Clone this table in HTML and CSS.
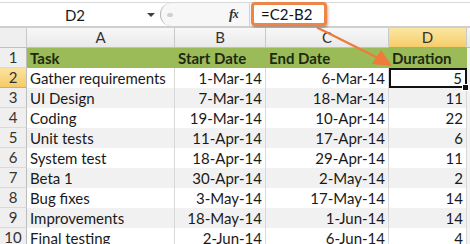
FILE: index.html
```html
<!DOCTYPE html>
<html>
<head>
<meta charset="utf-8">
<link rel="stylesheet" href="styles.css">
</head>
<body>
<div class="app">
  <div class="toolbar">
    <div class="namebox"><span class="name">D2</span><span class="caret"></span></div>
    <div class="splitter"><span class="dot"></span></div>
    <div class="fx">f<span class="x">x</span></div>
    <div class="formula"><span class="formula-hl">=C2-B2</span></div>
  </div>
  <div class="sheet">
    <div class="ch corner"></div>
    <div class="ch">A</div>
    <div class="ch">B</div>
    <div class="ch">C</div>
    <div class="ch sel">D</div>
    <div class="ch tail"></div>

    <div class="rh">1</div>
    <div class="c hd">Task</div>
    <div class="c hd">Start Date</div>
    <div class="c hd">End Date</div>
    <div class="c hd">Duration</div>
    <div class="c tail"></div>

    <div class="rh sel">2</div>
    <div class="c">Gather requirements</div>
    <div class="c r">1-Mar-14</div>
    <div class="c r">6-Mar-14</div>
    <div class="c r active">5<span class="handle"></span></div>
    <div class="c tail"></div>

    <div class="rh">3</div>
    <div class="c g">UI Design</div>
    <div class="c g r">7-Mar-14</div>
    <div class="c g r">18-Mar-14</div>
    <div class="c g r">11</div>
    <div class="c tail"></div>

    <div class="rh">4</div>
    <div class="c">Coding</div>
    <div class="c r">19-Mar-14</div>
    <div class="c r">10-Apr-14</div>
    <div class="c r">22</div>
    <div class="c tail"></div>

    <div class="rh">5</div>
    <div class="c g">Unit tests</div>
    <div class="c g r">11-Apr-14</div>
    <div class="c g r">17-Apr-14</div>
    <div class="c g r">6</div>
    <div class="c tail"></div>

    <div class="rh">6</div>
    <div class="c">System test</div>
    <div class="c r">18-Apr-14</div>
    <div class="c r">29-Apr-14</div>
    <div class="c r">11</div>
    <div class="c tail"></div>

    <div class="rh">7</div>
    <div class="c g">Beta 1</div>
    <div class="c g r">30-Apr-14</div>
    <div class="c g r">2-May-14</div>
    <div class="c g r">2</div>
    <div class="c tail"></div>

    <div class="rh">8</div>
    <div class="c">Bug fixes</div>
    <div class="c r">3-May-14</div>
    <div class="c r">17-May-14</div>
    <div class="c r">14</div>
    <div class="c tail"></div>

    <div class="rh">9</div>
    <div class="c g">Improvements</div>
    <div class="c g r">18-May-14</div>
    <div class="c g r">1-Jun-14</div>
    <div class="c g r">14</div>
    <div class="c tail"></div>

    <div class="rh">10</div>
    <div class="c">Final testing</div>
    <div class="c r">2-Jun-14</div>
    <div class="c r">6-Jun-14</div>
    <div class="c r">4</div>
    <div class="c tail"></div>
  </div>
  <svg class="arrow" width="470" height="244" viewBox="0 0 470 244">
    <line x1="318" y1="28" x2="380" y2="59" stroke="#ee7b3c" stroke-width="2.5" stroke-linecap="round"/>
    <polygon points="392,66 372,64 381,50" fill="#ee7b3c"/>
  </svg>
</div>
</body>
</html>
```
FILE: styles.css
```css
html, body {
  margin: 0;
  padding: 0;
  background: #ffffff;
}
.app {
  position: relative;
  width: 470px;
  height: 244px;
  overflow: hidden;
  font-family: "Lato", "Liberation Sans", sans-serif;
  color: #1a1a1a;
}
.toolbar {
  display: flex;
  height: 23px;
  margin-top: 2px;
  border-top: 1px solid #d9d9d9;
  border-bottom: 2px solid #cfcfcf;
  background: #ffffff;
}
.namebox {
  width: 160px;
  display: flex;
  align-items: center;
  position: relative;
  background: #fff;
}
.name {
  width: 150px;
  text-align: center;
  font-size: 15px;
  color: #1a1a1a;
}
.caret {
  width: 0;
  height: 0;
  border-left: 4px solid transparent;
  border-right: 4px solid transparent;
  border-top: 4px solid #404040;
  margin-left: -3px;
}
.splitter {
  width: 60px;
  background: #f7f7f7;
  border-left: 1px solid #b9b9b9;
  border-radius: 11px 0 0 11px;
  display: flex;
  align-items: center;
  padding-left: 6px;
}
.dot {
  width: 6px;
  height: 4px;
  border-radius: 3px;
  background: #d0d0d0;
}
.fx {
  width: 20px;
  font-family: "Liberation Serif", serif;
  font-style: italic;
  font-weight: bold;
  font-size: 14px;
  color: #333;
  display: flex;
  align-items: center;
  background: #f7f7f7;
  padding-left: 2px;
  letter-spacing: -1px;
}
.fx .x { font-size: 12px; }
.formula {
  flex: 1;
  display: flex;
  align-items: center;
  border-left: 1px solid #d5d5d5;
}
.formula-hl {
  display: block;
  height: 18px;
  width: 63px;
  margin-left: 1px;
  margin-top: -2px;
  padding-left: 7px;
  line-height: 18px;
  font-size: 15px;
  color: #111;
  border: 3px solid #ec8648;
  border-radius: 4px;
  box-shadow: 1px 2px 3px rgba(120, 60, 20, 0.45);
  background: #fff;
}
.sheet {
  display: grid;
  grid-template-columns: 27px 148px 91px 123px 78px 3px;
  grid-auto-rows: 20px;
  font-size: 15px;
}
.ch {
  background: linear-gradient(#f8f8f8, #e9e9e9);
  border-right: 1px solid #c9c9c9;
  border-bottom: 1px solid #c0c0c0;
  text-align: center;
  line-height: 19px;
  color: #333;
  font-size: 15px;
}
.ch.corner { background: #efefef; }
.ch.sel {
  background: linear-gradient(#fbe7a2, #f6cd69);
  border-bottom: 1px solid #c9a43f;
}
.ch.tail { border-right: none; }
.rh {
  background: #efefef;
  border-right: 1px solid #bdbdbd;
  border-bottom: 1px solid #dadada;
  text-align: center;
  line-height: 19px;
  color: #333;
}
.rh.sel {
  background: linear-gradient(#fbe3a0, #f5cb66);
  border-bottom: 1px solid #d8b04c;
}
.c {
  border-right: 1px solid #d8d8d8;
  padding: 0 3px;
  line-height: 20px;
  white-space: nowrap;
  overflow: hidden;
  background: #fff;
}
.c.g { background: #f1f1f1; }
.c.r { text-align: right; }
.c.hd {
  background: #9bbb59;
  font-weight: bold;
  color: #1c2b10;
  border-right-color: #9bbb59;
}
.c.tail {
  padding: 0;
  background: #f3f3f3;
  border-right: none;
}
.c.active {
  position: relative;
  outline: 2px solid #111;
  outline-offset: -2px;
  overflow: visible;
  padding-right: 4px;
}
.handle {
  position: absolute;
  right: -3px;
  bottom: -3px;
  width: 5px;
  height: 5px;
  background: #111;
  border: 1px solid #fff;
}
.arrow {
  position: absolute;
  left: 0;
  top: 0;
  pointer-events: none;
}
```
